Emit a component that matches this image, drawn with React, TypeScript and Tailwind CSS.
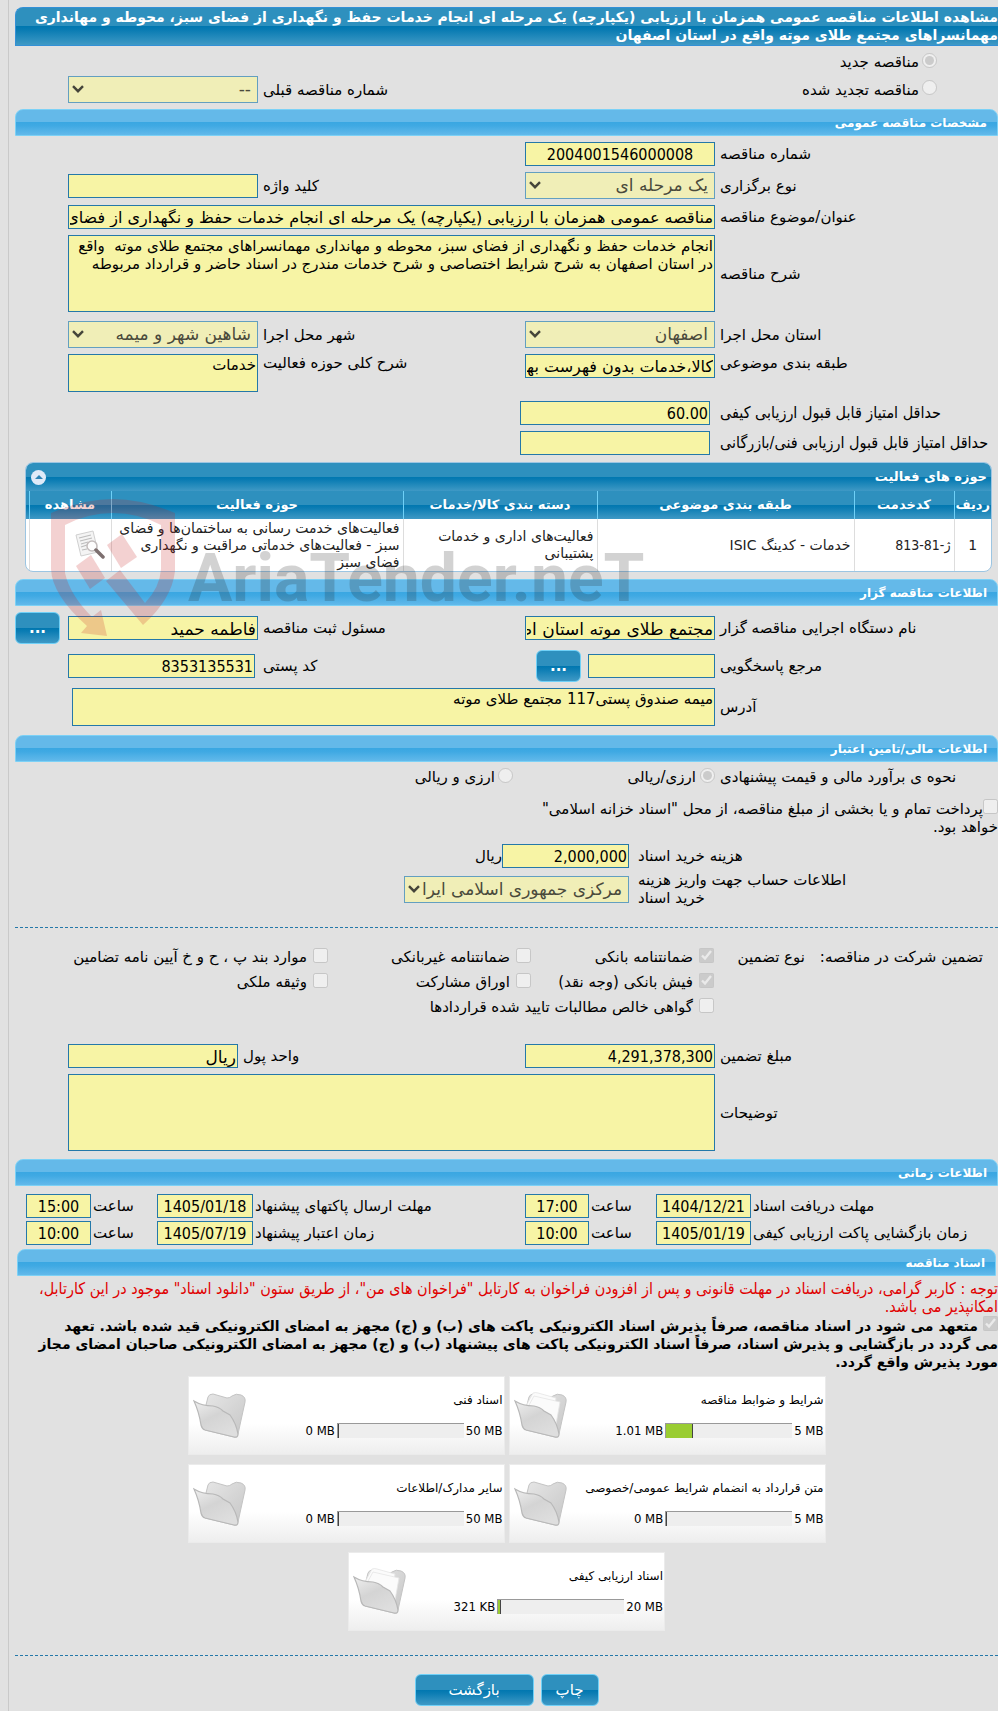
import { useId } from "react";
import type { ReactNode } from "react";
import clsx from "clsx";

const FIELD = "block border border-[#2478a9] bg-[#f7f4a5] text-black outline-none";
const ROW = "grid grid-cols-[278px_190px_1fr_190px_48px] gap-x-[5px] items-center";
const TIMES = "grid grid-cols-[245px_95px_63px_64px_1fr_96px_62px_65px_9px] gap-x-[2px] items-center";
const CONDENSED = "font-['DejaVu_Sans_Condensed','DejaVu_Sans',sans-serif]";
const BLUE = "bg-[linear-gradient(#2e90be_0%,#2e90be_50%,#0077b0_50%,#0a7cb3_60%,#3f99c5_100%)]";

function Section({ children, className }: { children: ReactNode; className?: string }) {
    return (
        <h2
            className={clsx(
                "h-[27px] rounded-t-lg border border-[#7cd1f6] bg-[linear-gradient(#64b9e9_0%,#64b9e9_48%,#3aa7e2_50%,#3fa9e3_62%,#62b9ea_100%)] pr-[10px] text-[12px] leading-[26px] font-bold text-white",
                className
            )}
        >
            {children}
        </h2>
    );
}

function Label({ id, children, className }: { id?: string; children: ReactNode; className?: string }) {
    return (
        <label htmlFor={id} className={clsx("text-left", className)}>
            {children}
        </label>
    );
}

// numeric values use the narrower face, words the wide one
function Input({ id, value = "", numeric, className }: { id: string; value?: string; numeric?: boolean; className?: string }) {
    return (
        <input
            id={id}
            type="text"
            readOnly
            defaultValue={value}
            className={clsx(FIELD, "h-6 w-full px-px pt-px leading-[22px]", numeric ? [CONDENSED, "text-[16px]"] : "text-[17px]", className)}
        />
    );
}

function Area({ id, value = "", className }: { id: string; value?: string; className?: string }) {
    return (
        <textarea
            id={id}
            readOnly
            defaultValue={value}
            className={clsx(FIELD, "w-full resize-none overflow-hidden p-px text-[15px] leading-[18px]", className)}
        />
    );
}

function Select({ id, value, className }: { id: string; value: string; className?: string }) {
    return (
        <div className={clsx("relative", className)}>
            <select
                id={id}
                disabled
                className="block h-[27px] w-full appearance-none border border-[#639fc0] bg-[#f0eeb7] pr-[6px] pl-4 text-[17px] leading-[25px] text-[#4a4a3c] opacity-100"
            >
                <option>{value}</option>
            </select>
            <svg viewBox="0 0 12 8" className="pointer-events-none absolute top-[9px] left-1 h-2 w-3" fill="none" stroke="#45453a" strokeWidth="2.4">
                <path d="M1 1.2 L6 6.2 L11 1.2" />
            </svg>
        </div>
    );
}

function Choice({ type, name, checked, children, className }: { type: "radio" | "checkbox"; name?: string; checked?: boolean; children: ReactNode; className?: string }) {
    const id = useId();
    return (
        <span className={clsx("flex items-center", className)}>
            <input id={id} type={type} name={name} disabled defaultChecked={checked} className="-mt-1 h-[15px] w-[15px] shrink-0" />
            <label htmlFor={id} className="whitespace-nowrap">{children}</label>
        </span>
    );
}

function Button({ children, className }: { children: ReactNode; className?: string }) {
    return (
        <button type="button" className={clsx("h-8 rounded-md border border-[#6fd0f7] text-[15px] text-white", BLUE, className)}>
            {children}
        </button>
    );
}

function Folder({ full }: { full?: boolean }) {
    return (
        <svg viewBox="0 0 54 48" className="ml-1 h-12 w-[54px] shrink-0" aria-hidden="true">
            <defs>
                <linearGradient id="back" x1="0" y1="0" x2="1" y2="1">
                    <stop offset="0" stopColor="#e6e6e6" />
                    <stop offset="1" stopColor="#c6c6c6" />
                </linearGradient>
                <linearGradient id="front" x1="0" y1="0" x2="0.6" y2="1">
                    <stop offset="0" stopColor="#efefef" />
                    <stop offset="0.5" stopColor="#d4d4d4" />
                    <stop offset="1" stopColor="#dedede" />
                </linearGradient>
            </defs>
            <path d="M13 13 L15 5 Q16 2 20 2 L34 6 Q37 6 39 4 Q43 1 48 3 Q53 5 52 10 L45 42 Q44 46 41 45 L12 38 Z" fill="url(#back)" stroke="#c4c4c4" />
            {full && (
                <g fill="#fbfbfb" stroke="#e4e4e4" strokeWidth="0.8">
                    <path d="M12 14 L19 1 Q22 0 24 1 L42 6 L37 34 L14 28 Z" />
                    <path d="M14 15 L20 4 L46 10 L41 38 L16 30 Z" />
                </g>
            )}
            <path d="M1 9 Q9 14 20 14 Q26 15 30 19 L37 23 Q43 31 45 42 Q45 46 41 45 L12 38 Q9 37 8 33 Q6 20 1 9 Z" fill="url(#front)" stroke="#b8b8b8" strokeWidth="1.2" />
        </svg>
    );
}

const docs = [
    { title: "شرایط و ضوابط مناقصه", max: "5 MB", used: "1.01 MB", percent: 21, full: true },
    { title: "اسناد فنی", max: "50 MB", used: "0 MB", percent: 0, full: false },
    { title: "متن قرارداد به انضمام شرایط عمومی/خصوصی", max: "5 MB", used: "0 MB", percent: 0, full: false },
    { title: "سایر مدارک/اطلاعات", max: "50 MB", used: "0 MB", percent: 0, full: false },
    { title: "اسناد ارزیابی کیفی", max: "20 MB", used: "321 KB", percent: 2, full: true },
];

function DocCard({ doc }: { doc: (typeof docs)[number] }) {
    return (
        <a href="#docs" className="flex h-[79px] w-[317px] items-center justify-between border border-[#ebebeb] bg-linear-to-b from-white from-60% to-[#eeeeee]">
            <div className="flex flex-col gap-[14px] pr-px pb-[2px]">
                <span className="text-[12px] leading-[17px]">{doc.title}</span>
                <div className={clsx("flex items-center gap-[2px] text-[13px] leading-[15px]", CONDENSED)}>
                    <span dir="ltr">{doc.max}</span>
                    <div dir="ltr" className="h-[15px] w-[127px] border-t border-l border-[#999999] bg-[#eeeeee]">
                        <div className="h-full border-r border-[#444444] bg-[#9acd32]" style={{ width: doc.percent + "%" }} />
                    </div>
                    <span dir="ltr">{doc.used}</span>
                </div>
            </div>
            <Folder full={doc.full} />
        </a>
    );
}

function Watermark() {
    return (
        <div dir="ltr" aria-hidden="true" className="pointer-events-none absolute top-[37px] left-[25px] z-10 flex items-start opacity-20">
            <svg viewBox="0 0 126 138" className="h-[138px] w-[126px] shrink-0" fill="#c81e1e">
                <path d="M63 0 Q92 0 125 14 L125 72 Q122 100 93 126 L56 82 L70 71 L95 104 Q110 88 111 70 L111 26 Q88 14 63 14 Q38 14 15 26 L15 74 Q20 96 42 118 L51 111 L57 137 L31 134 L37 127 Q2 96 1 70 L1 14 Q34 0 63 0 Z" />
                <path d="M26 67 L41 56 L55 79 L40 90 Z" />
                <path d="M57 46 L72 35 L87 58 L71 69 Z" />
            </svg>
            <span className="mt-[45px] ml-[12px] font-['Roboto',sans-serif] text-[66px] leading-[70px] font-bold text-[#222222]">
                AriaTender.neT
            </span>
        </div>
    );
}

const TH = "border-l border-[#6fd0f7] p-0 font-bold";
const TD = "border-l border-[#dddddd] px-[3px] py-0";

export default function App() {
    return (
        <div dir="rtl" className="bg-[#e1e1e1] pl-2 font-['DejaVu_Sans',sans-serif] text-[15px] leading-[18px] text-black">
            <main className="border-l border-[#c9c9c9] pt-[7px] pb-[5px] pl-[6px]">
                <h1 className={clsx("min-h-[39px] rounded-tl-lg border border-r-0 border-[#3390d6] text-[14px] leading-[18px] font-bold text-white", BLUE)}>
                    مشاهده اطلاعات مناقصه عمومی همزمان با ارزیابی (یکپارچه) یک مرحله ای انجام خدمات حفظ و نگهداری از فضای سبز، محوطه و مهانداری مهمانسراهای مجتمع طلای موته واقع در استان اصفهان
                </h1>

                {/* Tender kind */}
                <div className="flex flex-col gap-[2px] pt-1 pb-[6px]">
                    <div className={clsx(ROW, "h-6")}>
                        <Choice type="radio" name="kind" checked className="gap-[3px] pr-[61px]">مناقصه جدید</Choice>
                    </div>
                    <div className={ROW}>
                        <Choice type="radio" name="kind" className="gap-[3px] pr-[61px]">مناقصه تجدید شده</Choice>
                        <span />
                        <Label id="prev">شماره مناقصه قبلی</Label>
                        <Select id="prev" value="--" />
                    </div>
                </div>

                <Section>مشخصات مناقصه عمومی</Section>
                <div className="flex flex-col gap-[6px] pt-[6px] pb-[7px]">
                    <div className={ROW}>
                        <Label id="number">شماره مناقصه</Label>
                        <Input id="number" numeric value="2004001546000008" className="text-center" />
                    </div>
                    <div className={ROW}>
                        <Label id="type">نوع برگزاری</Label>
                        <Select id="type" value="یک مرحله ای" />
                        <Label id="keyword">کلید واژه</Label>
                        <Input id="keyword" />
                    </div>
                    <div className={ROW}>
                        <Label id="title">عنوان/موضوع مناقصه</Label>
                        <Input id="title" className="col-span-3 text-[16px]!" value="مناقصه عمومی همزمان با ارزیابی (یکپارچه) یک مرحله ای انجام خدمات حفظ و نگهداری از فضای سبز، محوطه و مهانداری" />
                    </div>
                    <div className={ROW}>
                        <Label id="desc">شرح مناقصه</Label>
                        <Area id="desc" className="col-span-3 h-[77px]" value="انجام خدمات حفظ و نگهداری از فضای سبز، محوطه و مهانداری مهمانسراهای مجتمع طلای موته  واقع در استان اصفهان به شرح شرایط اختصاصی و شرح خدمات مندرج در اسناد حاضر و قرارداد مربوطه" />
                    </div>
                    <div className={clsx(ROW, "mt-[3px]")}>
                        <Label id="province">استان محل اجرا</Label>
                        <Select id="province" value="اصفهان" />
                        <Label id="city">شهر محل اجرا</Label>
                        <Select id="city" value="شاهین شهر و میمه" />
                    </div>
                    <div className={clsx(ROW, "items-start")}>
                        <Label id="category">طبقه بندی موضوعی</Label>
                        <Input id="category" className="text-[16px]!" value="کالا،خدمات بدون فهرست بها" />
                        <Label id="scope">شرح کلی حوزه فعالیت</Label>
                        <Area id="scope" value="خدمات" className="h-[38px]" />
                    </div>
                    <div className={clsx(ROW, "mt-[3px]")}>
                        <Label id="minq" className={clsx("text-[16px]", CONDENSED)}>حداقل امتیاز قابل قبول ارزیابی کیفی</Label>
                        <div className="col-span-3 pr-[5px]">
                            <Input id="minq" numeric value="60.00" className="max-w-[190px]" />
                        </div>
                    </div>
                    <div className={ROW}>
                        <Label id="mint" className={clsx("text-[16px]", CONDENSED)}>حداقل امتیاز قابل قبول ارزیابی فنی/بازرگانی</Label>
                        <div className="col-span-3 pr-[5px]">
                            <Input id="mint" className="max-w-[190px]" />
                        </div>
                    </div>
                </div>

                {/* Activity areas */}
                <div className="relative mr-[6px] ml-[10px]">
                    <div className="overflow-hidden rounded-lg border border-[#9cc5e2] bg-white">
                        <div className={clsx("flex h-7 items-center justify-between pr-1 pl-[5px] text-[13px] font-bold text-white", BLUE)}>
                            <span>حوزه های فعالیت</span>
                            <button type="button" aria-label="بستن" className="flex h-[15px] w-[15px] items-center justify-center rounded-full bg-[#dfeaf8]">
                                <svg viewBox="0 0 8 4" className="h-1 w-2" fill="#2e83b5">
                                    <path d="M4 0 L8 4 L0 4 Z" />
                                </svg>
                            </button>
                        </div>
                        <table className="w-full table-fixed border-collapse">
                            <colgroup>
                                <col className="w-[37px]" />
                                <col className="w-[100px]" />
                                <col className="w-[257px]" />
                                <col className="w-[194px]" />
                                <col />
                                <col className="w-[82px]" />
                                <col className="w-[3px]" />
                            </colgroup>
                            <thead className={clsx("h-7 text-[13px] text-white", BLUE)}>
                                <tr>
                                    <th className={TH}>ردیف</th>
                                    <th className={TH}>کدخدمت</th>
                                    <th className={TH}>طبقه بندی موضوعی</th>
                                    <th className={TH}>دسته بندی کالا/خدمات</th>
                                    <th className={TH}>حوزه فعالیت</th>
                                    <th className={TH}>مشاهده</th>
                                    <th className="p-0" />
                                </tr>
                            </thead>
                            <tbody className="text-[14px] leading-[17px] text-[#222222]">
                                <tr className="h-[52px]">
                                    <td className={clsx(TD, "text-center")}>1</td>
                                    <td className={clsx(TD, CONDENSED)}>ژ-81-813</td>
                                    <td className={TD}>خدمات - کدینگ ISIC</td>
                                    <td className={TD}>فعالیت‌های اداری و خدمات پشتیبانی</td>
                                    <td className={TD}>فعالیت‌های خدمت رسانی به ساختمان‌ها و فضای سبز - فعالیت‌های خدماتی مراقبت و نگهداری فضای سبز</td>
                                    <td className={TD}>
                                        <button type="button" aria-label="مشاهده" className="mr-[3px] block h-[30px] w-[30px]">
                                            <svg viewBox="0 0 30 30" className="h-[30px] w-[30px]">
                                                <path d="M1 5 L18 1 L23 22 L6 26 Z" fill="#f4f4f4" stroke="#d0d0d0" />
                                                <path d="M4 8 L16 5 M5 11 L17 8 M6 14 L13 12 M6 17 L12 15 M7 20 L12 19" stroke="#bdbdbd" strokeWidth="1.2" />
                                                <circle cx="17" cy="16" r="5" fill="#ffffff" fillOpacity="0.8" stroke="#c2bcbc" strokeWidth="1.5" />
                                                <path d="M21 20 L28 27" stroke="#7d6f6f" strokeWidth="3.5" strokeLinecap="round" />
                                            </svg>
                                        </button>
                                    </td>
                                    <td className="p-0" />
                                </tr>
                            </tbody>
                        </table>
                    </div>
                    <Watermark />
                </div>

                {/* Organiser */}
                <Section className="mt-[7px]">اطلاعات مناقصه گزار</Section>
                <div className="flex flex-col gap-[6px] pt-[6px] pb-[9px]">
                    <div className={ROW}>
                        <Label id="org">نام دستگاه اجرایی مناقصه گزار</Label>
                        <Input id="org" value="مجتمع طلای موته استان اصفهان" />
                        <Label id="officer">مسئول ثبت مناقصه</Label>
                        <Input id="officer" value="فاطمه حمید" />
                        <Button className="w-[45px] justify-self-end font-bold">...</Button>
                    </div>
                    <div className={ROW}>
                        <Label id="contact">مرجع پاسخگویی</Label>
                        <div className="flex items-center gap-[7px]">
                            <Input id="contact" className="max-w-[127px]" />
                            <Button className="w-[45px] font-bold">...</Button>
                        </div>
                        <Label id="postal">کد پستی</Label>
                        <Input id="postal" numeric value="8353135531" className="max-w-[187px] justify-self-end" />
                    </div>
                    <div className={ROW}>
                        <Label id="address">آدرس</Label>
                        <div className="col-span-3 pl-1">
                            <Area id="address" value="میمه صندوق پستی117 مجتمع طلای موته" className="h-[38px]" />
                        </div>
                    </div>
                </div>

                {/* Finance */}
                <Section>اطلاعات مالی/تامین اعتبار</Section>
                <div className={clsx(ROW, "pt-[3px]")}>
                    <span className="text-left">نحوه ی برآورد مالی و قیمت پیشنهادی</span>
                    <div className="col-span-3 flex h-6 items-center">
                        <Choice type="radio" name="currency" checked className="w-[202px] gap-1">ارزی/ریالی</Choice>
                        <Choice type="radio" name="currency" className="gap-[3px]">ارزی و ریالی</Choice>
                    </div>
                </div>
                <div className="mt-[10px] w-[475px]">
                    <input id="treasury" type="checkbox" disabled className="h-[15px] w-[15px]" />
                    <label htmlFor="treasury">پرداخت تمام و یا بخشی از مبلغ مناقصه، از محل "اسناد خزانه اسلامی"<br />خواهد بود.</label>
                </div>
                <div className="mt-[8px] grid grid-cols-[360px_1fr] items-center gap-x-[9px] gap-y-[3px]">
                    <Label id="fee">هزینه خرید اسناد</Label>
                    <div className="flex items-center">
                        <Input id="fee" numeric value="2,000,000" className="max-w-[127px]" />
                        <span>ریال</span>
                    </div>
                    <Label id="account" className="pr-[140px]">اطلاعات حساب جهت واریز هزینه<br />خرید اسناد</Label>
                    <Select id="account" value="مرکزی جمهوری اسلامی ایرا" className="max-w-[225px]" />
                </div>

                {/* Guarantee */}
                <div className="mt-5 grid grid-cols-[193px_91px_183px_203px_1fr] border-t border-dashed border-[#2478a9] pt-[17px] leading-[25px]">
                    <span className="pr-[15px]">تضمین شرکت در مناقصه:</span>
                    <span>نوع تضمین</span>
                    <Choice type="checkbox" checked className="gap-[6px]">ضمانتنامه بانکی</Choice>
                    <Choice type="checkbox" className="gap-[6px]">ضمانتنامه غیربانکی</Choice>
                    <Choice type="checkbox" className="gap-[6px]">موارد بند پ ، ح و خ آیین نامه تضامین</Choice>
                    <Choice type="checkbox" checked className="col-start-3 gap-[6px]">فیش بانکی (وجه نقد)</Choice>
                    <Choice type="checkbox" className="gap-[6px]">اوراق مشارکت</Choice>
                    <Choice type="checkbox" className="gap-[6px]">وثیقه ملکی</Choice>
                    <Choice type="checkbox" className="col-span-2 col-start-3 gap-[6px]">گواهی خالص مطالبات تایید شده قراردادها</Choice>
                </div>
                <div className="mt-6 flex flex-col gap-[6px] pb-2">
                    <div className={ROW}>
                        <Label id="amount">مبلغ تضمین</Label>
                        <Input id="amount" numeric value="4,291,378,300" />
                        <div className="col-span-2 flex items-center justify-end gap-[5px]">
                            <Label id="unit">واحد پول</Label>
                            <Input id="unit" value="ریال" className="max-w-[170px]" />
                        </div>
                    </div>
                    <div className={ROW}>
                        <Label id="notes">توضیحات</Label>
                        <Area id="notes" className="col-span-3 h-[77px]" />
                    </div>
                </div>

                {/* Schedule */}
                <Section>اطلاعات زمانی</Section>
                <div className="flex flex-col gap-[3px] pt-2 pb-1">
                    <div className={TIMES}>
                        <Label id="d1">مهلت دریافت اسناد</Label>
                        <Input id="d1" numeric value="1404/12/21" className="text-center" />
                        <Label id="h1">ساعت</Label>
                        <Input id="h1" numeric value="17:00" className="text-center" />
                        <Label id="d2">مهلت ارسال پاکتهای پیشنهاد</Label>
                        <Input id="d2" numeric value="1405/01/18" className="text-center" />
                        <Label id="h2">ساعت</Label>
                        <Input id="h2" numeric value="15:00" className="text-center" />
                    </div>
                    <div className={TIMES}>
                        <Label id="d3">زمان بازگشایی پاکت ارزیابی کیفی</Label>
                        <Input id="d3" numeric value="1405/01/19" className="text-center" />
                        <Label id="h3">ساعت</Label>
                        <Input id="h3" numeric value="10:00" className="text-center" />
                        <Label id="d4">زمان اعتبار پیشنهاد</Label>
                        <Input id="d4" numeric value="1405/07/19" className="text-center" />
                        <Label id="h4">ساعت</Label>
                        <Input id="h4" numeric value="10:00" className="text-center" />
                    </div>
                </div>

                {/* Documents */}
                <Section className="mx-[2px]">اسناد مناقصه</Section>
                <p className={clsx("pt-1 text-[16px] text-[#e00000]", CONDENSED)}>
                    توجه : کاربر گرامی، دریافت اسناد در مهلت قانونی و پس از افزودن فراخوان به کارتابل "فراخوان های من"، از طریق ستون "دانلود اسناد" موجود در این کارتابل، امکانپذیر می باشد.
                </p>
                <div className="text-[14px] font-bold">
                    <input id="commit" type="checkbox" disabled defaultChecked className="ml-[5px] h-[15px] w-[15px]" />
                    <label htmlFor="commit">
                        متعهد می شود در اسناد مناقصه، صرفاً پذیرش اسناد الکترونیکی پاکت های (ب) و (ج) مجهز به امضای الکترونیکی قید شده باشد. تعهد<br />
                        می گردد در بازگشایی و پذیرش اسناد، صرفاً اسناد الکترونیکی پاکت های پیشنهاد (ب) و (ج) مجهز به امضای الکترونیکی صاحبان امضای مجاز<br />
                        مورد پذیرش واقع گردد.
                    </label>
                </div>
                <div id="docs" className="mx-auto mt-[5px] flex max-w-[640px] flex-wrap justify-center gap-x-1 gap-y-[9px]">
                    {docs.map((doc) => (
                        <DocCard key={doc.title} doc={doc} />
                    ))}
                </div>
                <div className="mt-6 flex justify-center gap-[7px] border-t border-dashed border-[#2478a9] pt-[18px]">
                    <Button className="w-[58px]">چاپ</Button>
                    <Button className="w-[119px]">بازگشت</Button>
                </div>
            </main>
        </div>
    );
}
